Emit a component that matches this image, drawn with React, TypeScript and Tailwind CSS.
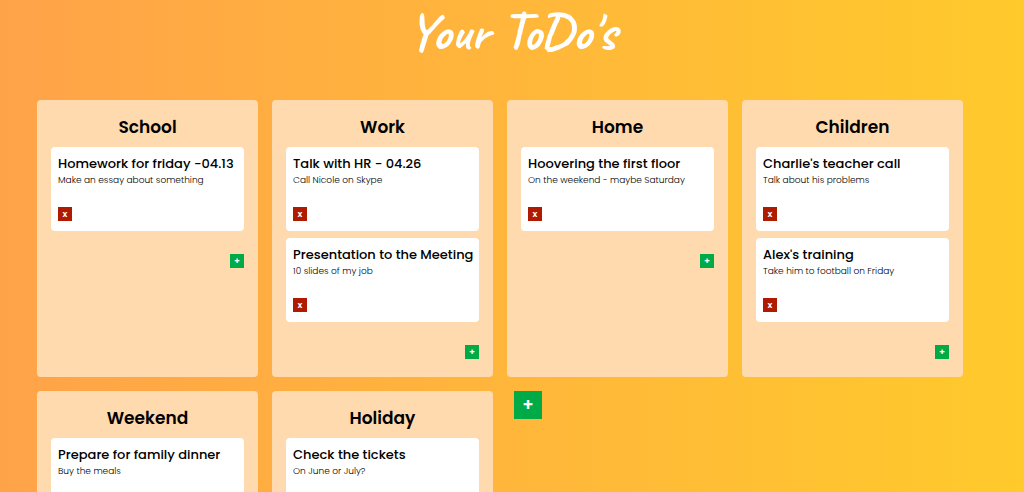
import { useId } from "react";

type Todo = { title: string; note: string };
type List = { name: string; todos: Todo[] };

const lists: List[] = [
  { name: "School", todos: [{ title: "Homework for friday -04.13", note: "Make an essay about something" }] },
  {
    name: "Work",
    todos: [
      { title: "Talk with HR - 04.26", note: "Call Nicole on Skype" },
      { title: "Presentation to the Meeting", note: "10 slides of my job" },
    ],
  },
  { name: "Home", todos: [{ title: "Hoovering the first floor", note: "On the weekend - maybe Saturday" }] },
  {
    name: "Children",
    todos: [
      { title: "Charlie's teacher call", note: "Talk about his problems" },
      { title: "Alex's training", note: "Take him to football on Friday" },
    ],
  },
  { name: "Weekend", todos: [{ title: "Prepare for family dinner", note: "Buy the meals" }] },
  { name: "Holiday", todos: [{ title: "Check the tickets", note: "On June or July?" }] },
];

function TodoCard({ title, note }: Todo) {
  return (
    <li className="flex flex-col items-start rounded bg-white pt-2 pr-1 pb-[10px] pl-[7px]">
      <h3 className="text-[13px] leading-[18px] font-medium">{title}</h3>
      <p className="text-[9px] leading-[14px] font-light">{note}</p>
      <button
        type="button"
        aria-label={`Delete ${title}`}
        className="mt-5 flex size-[14px] items-center justify-center bg-[#ae1b00] text-[9px] leading-none font-semibold text-white"
      >
        x
      </button>
    </li>
  );
}

function ListColumn({ name, todos }: List) {
  const id = useId();
  return (
    <section aria-labelledby={id} className="rounded bg-[#ffdaae] px-[14px] pt-[14px] pb-[18px]">
      <h2 id={id} className="mb-[7px] text-center text-[17px] leading-[26px] font-semibold">
        {name}
      </h2>
      <ul className="flex flex-col gap-[7px]">
        {todos.map((todo) => (
          <TodoCard key={todo.title} {...todo} />
        ))}
      </ul>
      <button
        type="button"
        aria-label={`Add to ${name}`}
        className="mt-[23px] ml-auto flex size-[14px] items-center justify-center bg-[#00ab47] text-[9px] leading-none font-semibold text-white"
      >
        +
      </button>
    </section>
  );
}

export default function App() {
  return (
    <div className="min-h-screen bg-linear-[90deg,#ffa349,#ffca2c] pb-8 font-['Poppins','Inter',sans-serif] text-black">
      <h1 className="px-4 text-center font-['Caveat','Lato',cursive] text-[53px] leading-[64px] font-bold text-white">
        Your ToDo's
      </h1>
      <main className="mt-9 grid grid-cols-4 gap-[14px] pr-[61px] pl-[37px]">
        {lists.map((list) => (
          <ListColumn key={list.name} {...list} />
        ))}
        <button
          type="button"
          aria-label="Add list"
          className="ml-[7px] flex size-7 items-center justify-center bg-[#00ab47] text-[17px] leading-none font-semibold text-white"
        >
          +
        </button>
      </main>
    </div>
  );
}
